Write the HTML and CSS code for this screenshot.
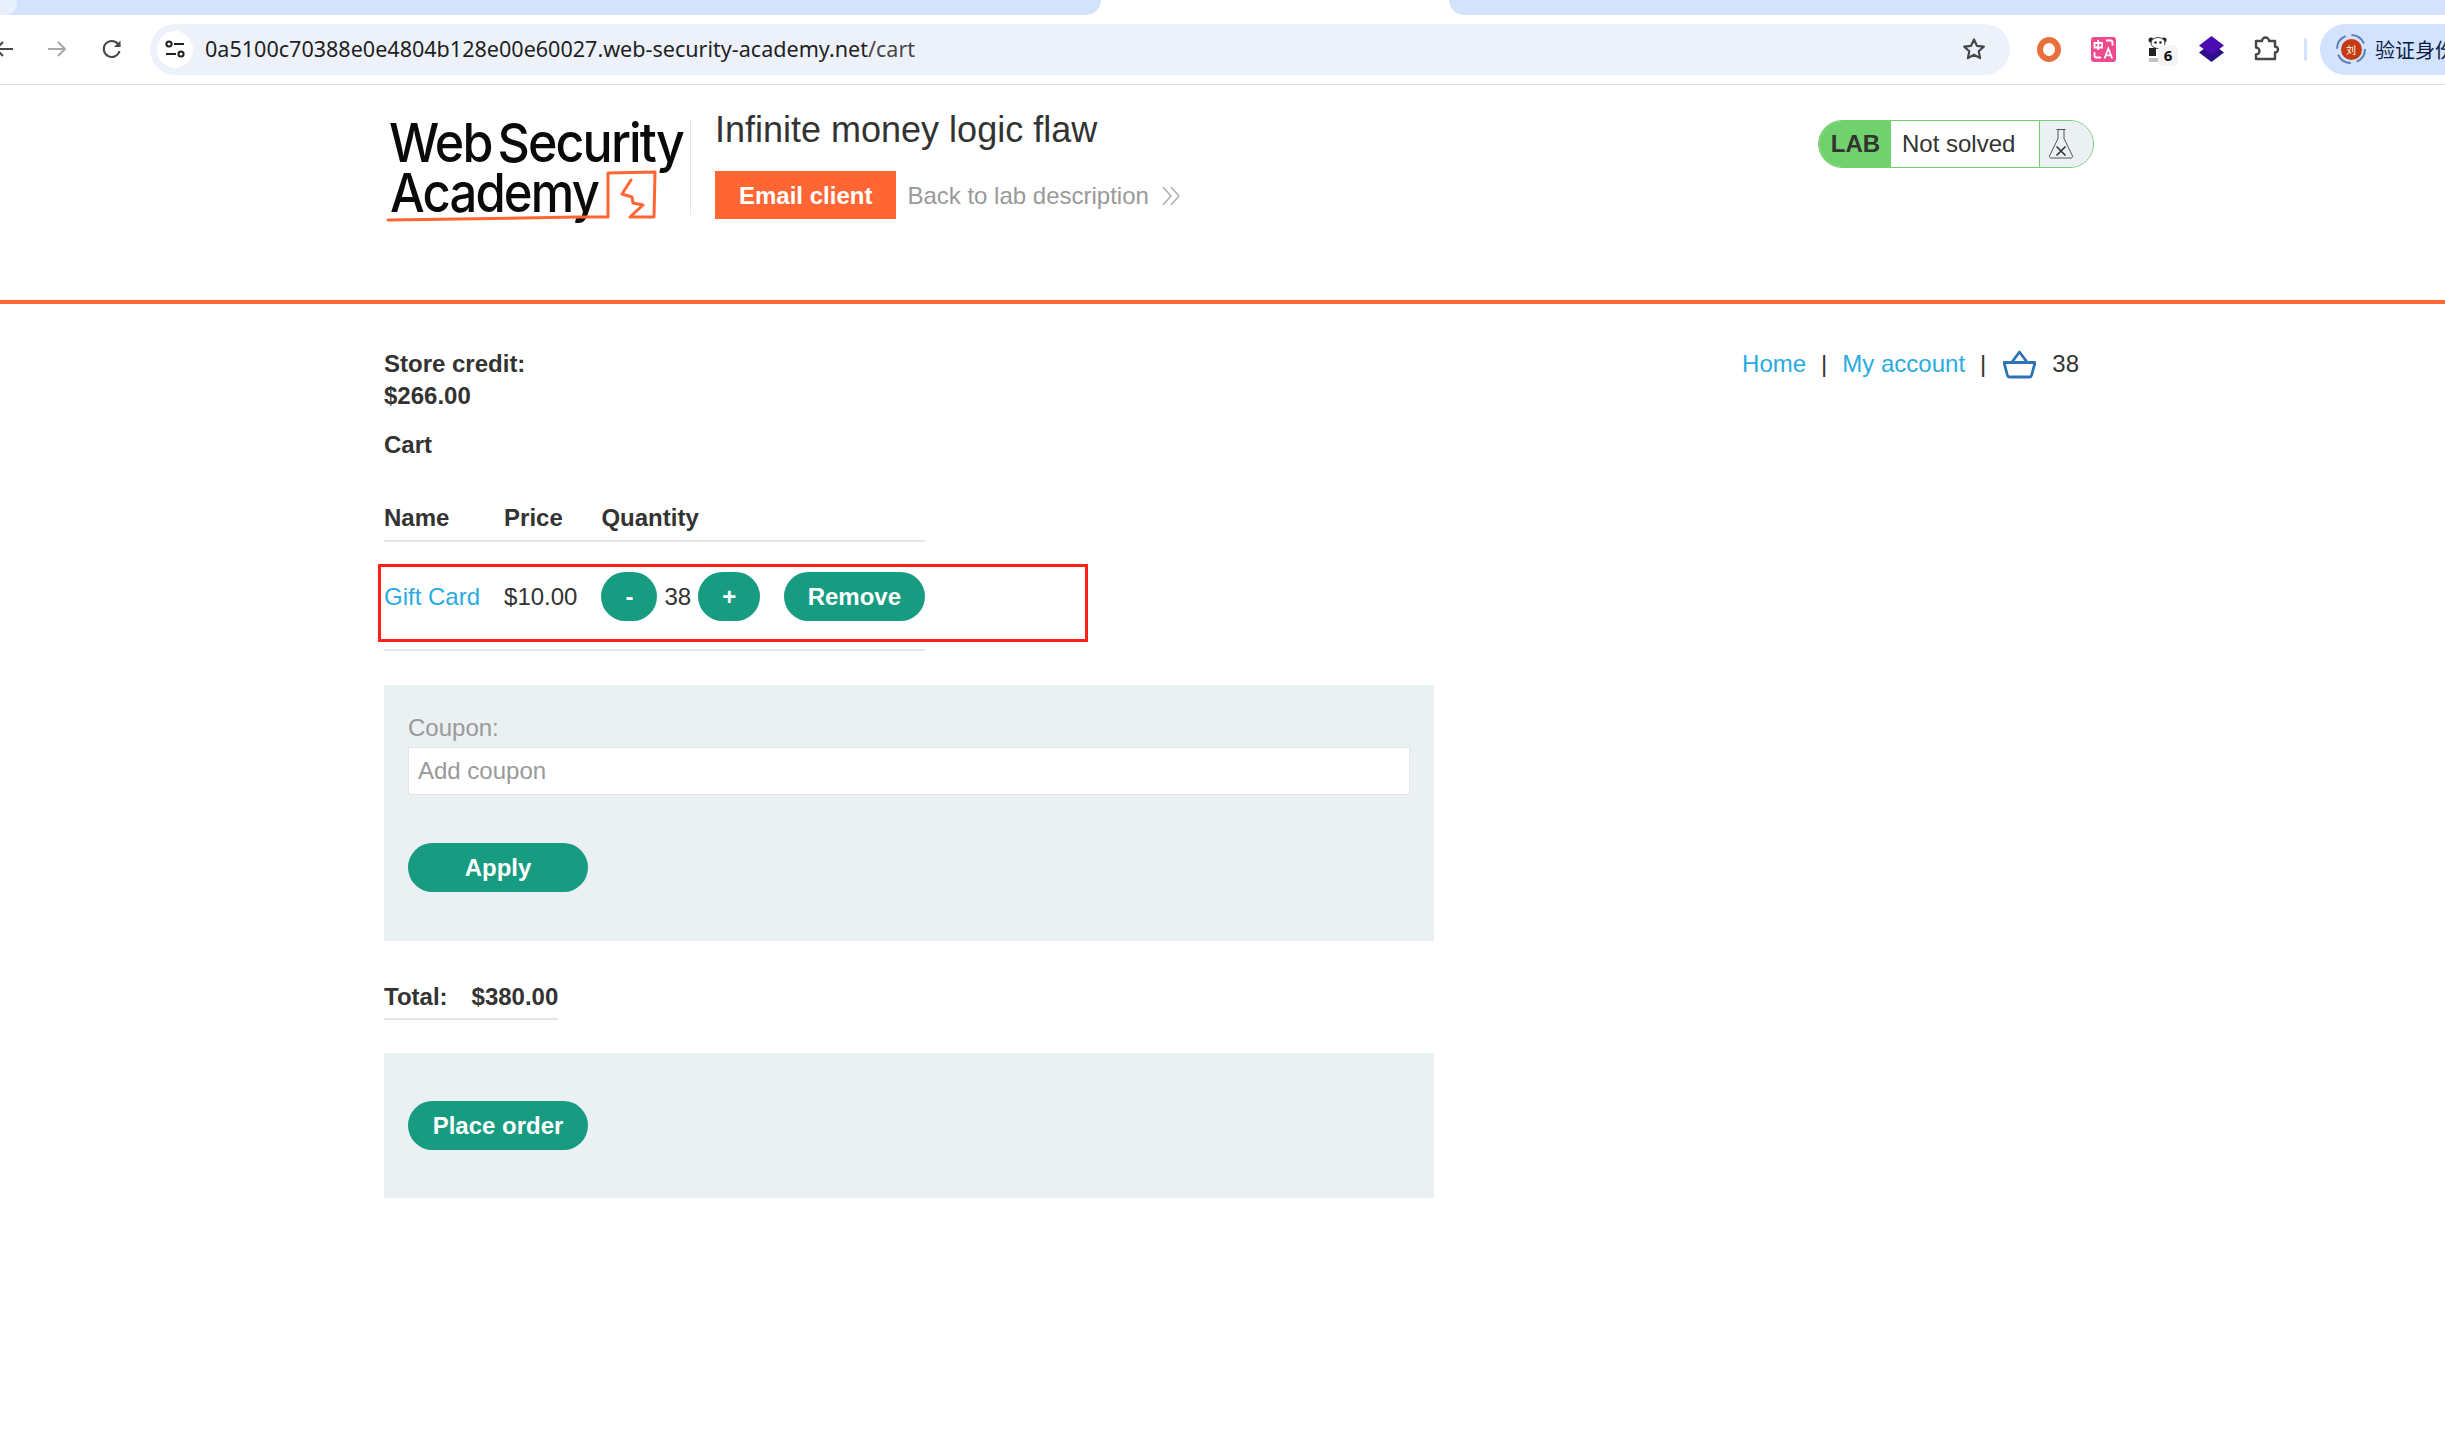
FILE: index.html
```html
<!DOCTYPE html>
<html lang="en">
<head>
<meta charset="utf-8">
<title>Infinite money logic flaw</title>
<link rel="stylesheet" href="styles.css">
</head>
<body>
<div class="tabstrip">
  <div class="tab-inactive tab-left"><span class="tab-notch"></span></div>
  <div class="tab-active"></div>
  <div class="tab-inactive tab-right"></div>
</div>
<div class="toolbar">
  <div class="nav-buttons">
    <svg class="ic-back" width="24" height="24" viewBox="0 0 24 24"><path d="M20 12H3M10 5l-7 7 7 7" fill="none" stroke="#474747" stroke-width="2"/></svg>
    <svg class="ic-fwd" width="24" height="24" viewBox="0 0 24 24"><path d="M3 12h17M13 5l7 7-7 7" fill="none" stroke="#a8a8a8" stroke-width="2"/></svg>
    <svg class="ic-reload" width="24" height="24" viewBox="0 0 24 24"><path d="M19.5 14a8 8 0 1 1-1.6-7.2L20 9" fill="none" stroke="#474747" stroke-width="2"/><path d="M20.5 3.500v6.500h-6.500z" fill="#474747"/></svg>
  </div>
  <div class="omnibox">
    <span class="tune">
      <svg width="22" height="20" viewBox="0 0 22 20"><g fill="none" stroke="#1f1f1f" stroke-width="2"><circle cx="5" cy="5" r="2.600"/><path d="M10 5h10M2 15h10"/><circle cx="17" cy="15" r="2.600"/></g></svg>
    </span>
    <span class="url">0a5100c70388e0e4804b128e00e60027.web-security-academy.net<span class="url-path">/cart</span></span>
    <svg class="star" width="26" height="26" viewBox="0 0 26 26"><path d="M13 3.500l2.900 6.300 6.900.8-5.100 4.700 1.400 6.800-6.100-3.400-6.100 3.400 1.400-6.800-5.100-4.700 6.900-.8z" fill="none" stroke="#474747" stroke-width="2.200" stroke-linejoin="round"/></svg>
  </div>
  <div class="extensions">
    <span class="ext-ring"></span>
    <svg class="ext" width="25" height="25" viewBox="0 0 25 25"><rect width="25" height="25" rx="3" fill="#ee4b8f"/><g fill="none" stroke="#fff" stroke-width="1.800"><path d="M3.500 6h7.500v4.500H3.500zM7.200 3v10M15 3.500h4.500a2 2 0 0 1 2 2v3M3.500 15v3.500a2 2 0 0 0 2 2h4.500"/><path d="M13.500 21.500l3.800-10 3.800 10M14.800 18.300h5"/></g></svg>
    <span class="ext-panda">
      <svg width="20" height="26" viewBox="0 0 20 26"><circle cx="3" cy="4" r="2.500" fill="#222"/><circle cx="16" cy="4" r="2.500" fill="#222"/><ellipse cx="10" cy="7" rx="7" ry="5.500" fill="#fff" stroke="#444"/><circle cx="7.500" cy="6.500" r="1.300" fill="#222"/><circle cx="12.500" cy="6.500" r="1.300" fill="#222"/><path d="M1 12h7v8H1z" fill="#222"/><path d="M1 23h10M1 25h9" stroke="#888"/></svg>
      <span class="ext-badge">6</span>
    </span>
    <svg class="ext" width="25" height="26" viewBox="0 0 25 26"><path d="M12.500 7L25 16.500 12.500 26 0 16.500z" fill="#2c0f8a"/><path d="M12.500 0L25 9.500 12.500 19 0 9.500z" fill="#4a0cb0"/></svg>
    <svg class="ext" width="26" height="26" viewBox="0 0 26 26"><path d="M2 5h6a3.500 3.500 0 0 1 7 0h6v5.500a3 3 0 0 1 0 6V23H2v-4.500a3 3 0 0 0 0-7z" fill="none" stroke="#474747" stroke-width="2.400" stroke-linejoin="round"/></svg>
    <span class="ext-sep"></span>
  </div>
  <div class="profile">
    <span class="avatar-ring">
      <svg class="ring-dash" width="30" height="30" viewBox="0 0 30 30"><circle cx="15" cy="15" r="14" fill="none" stroke="#5b7fb5" stroke-width="2" stroke-dasharray="16 6"/></svg>
      <span class="avatar">刘</span>
    </span>
    <span class="profile-text">验证身份</span>
  </div>
</div>

<header class="academy-header">
  <div class="logo-wrap">
    <svg class="logo" width="305" height="110" viewBox="0 0 305 110">
      <text class="logo-text logo-line1" x="4" y="42" textLength="294" lengthAdjust="spacingAndGlyphs">Web Security</text>
      <text class="logo-text" x="5" y="92" textLength="208" lengthAdjust="spacingAndGlyphs">Academy</text>
      <path d="M3 100C60 99.500 140 98 193 97l30 0V53l47-1-1 45h-24L258 85 248 83 247 77 237 74 246 60" fill="none" stroke="#ff6633" stroke-width="3" stroke-linejoin="round" stroke-linecap="round"/>
    </svg>
  </div>
  <div class="lab-title">
    <h2 class="lab-name">Infinite money logic flaw</h2>
    <div class="lab-actions">
      <a class="email-btn">Email client</a>
      <a class="back-link">Back to lab description</a>
      <svg class="chevrons" width="18" height="20" viewBox="0 0 18 20"><path d="M1 1l8 9-8 9M9 1l8 9-8 9" fill="none" stroke="#a9a9a9" stroke-width="1.300"/></svg>
    </div>
  </div>
  <div class="status-pill">
    <span class="status-lab">LAB</span>
    <span class="status-text">Not solved</span>
    <span class="status-flask">
      <svg width="26" height="32" viewBox="0 0 26 32"><path d="M8.500 1.500h9M10 1.500v9L1.500 28a1.500 1.500 0 0 0 1.500 2h20a1.500 1.500 0 0 0 1.500-2L16 10.500v-9" fill="none" stroke="#555" stroke-width="1"/><path d="M8.500 18.500l9 9M17.500 18.500l-9 9" stroke="#333" stroke-width="1.600"/></svg>
    </span>
  </div>
</header>

<main class="content">
  <div class="top-row">
    <div class="credit">
      <div class="bold-line">Store credit:</div>
      <div class="bold-line">$266.00</div>
    </div>
    <nav class="top-links">
      <a class="link">Home</a><span class="pipe">|</span>
      <a class="link">My account</a><span class="pipe">|</span>
      <svg class="basket" width="33" height="29" viewBox="0 0 33 29"><path d="M1 12.500h31l-3.500 13a2 2 0 0 1-2 1.500h-20a2 2 0 0 1-2-1.500zM9 12l7.500-10L24 12" fill="none" stroke="#2c72b6" stroke-width="2.800" stroke-linejoin="round"/></svg>
      <span class="basket-count">38</span>
    </nav>
  </div>
  <h3 class="cart-title">Cart</h3>

  <div class="cart-wrap">
    <table class="cart-table">
      <tbody>
        <tr class="head-row"><th>Name</th><th>Price</th><th>Quantity</th></tr>
        <tr class="item-row">
          <td><a class="link">Gift Card</a></td>
          <td>$10.00</td>
          <td class="qty-cell">
            <button class="btn">-</button>
            <span class="qty">38</span>
            <button class="btn">+</button>
            <button class="btn btn-remove">Remove</button>
          </td>
        </tr>
      </tbody>
    </table>
    <div class="annotation"></div>
  </div>

  <form class="panel panel-coupon">
    <label class="coupon-label">Coupon:</label>
    <input class="coupon-input" placeholder="Add coupon">
    <button type="button" class="btn btn-wide">Apply</button>
  </form>

  <table class="total-table">
    <tbody><tr><th>Total:</th><th>$380.00</th></tr></tbody>
  </table>

  <form class="panel panel-order">
    <button type="button" class="btn btn-wide">Place order</button>
  </form>
</main>
</body>
</html>
```
FILE: styles.css
```css
* { box-sizing: border-box; }
html, body { margin: 0; padding: 0; background: #fff; }
body {
  width: 2445px;
  height: 1449px;
  overflow: hidden;
  font-family: "Liberation Sans", Arial, sans-serif;
  font-size: 24px;
  color: #333332;
}

/* browser chrome */
.tabstrip { display: flex; height: 15px; background: #fff; }
.tab-inactive { background: #d3e3fd; height: 15px; position: relative; }
.tab-left { width: 1101px; border-bottom-right-radius: 15px; }
.tab-right { flex: 1; border-bottom-left-radius: 15px; }
.tab-active { width: 348px; }
.tab-notch {
  position: absolute; left: 0; top: 0; width: 17px; height: 15px;
  background: #e9f0fd; border-bottom-right-radius: 12px;
}
.toolbar {
  display: flex; align-items: center; height: 70px;
  padding-bottom: 10px; padding-top: 9px;
  border-bottom: 1px solid #e1e1e1;
  overflow: hidden;
}
.nav-buttons { display: flex; align-items: center; width: 150px; flex: none; position: relative; }
.ic-back { margin-left: -7px; }
.ic-fwd { margin-left: 28px; }
.ic-reload { margin-left: 31px; }
.omnibox {
  width: 1860px; height: 51px; flex: none;
  background: #edf2fa; border-radius: 26px;
  display: flex; align-items: center; padding-left: 7px; padding-right: 23px;
}
.tune {
  width: 36px; height: 37px; border-radius: 50%; background: #fff;
  display: flex; align-items: center; justify-content: center; flex: none;
}
.url {
  margin-left: 12px; font-family: "Noto Sans", "Open Sans", sans-serif;
  font-size: 21.550px; line-height: 29px; padding-bottom: 1px; color: #1f1f1f; white-space: nowrap; flex: 1;
}
.url-path { color: #474747; }
.star { flex: none; }
.extensions { display: flex; align-items: center; width: 310px; flex: none; padding-left: 27px; }
.ext-ring {
  width: 24px; height: 25px; border-radius: 50%;
  border: 6.500px solid #e8703a; flex: none; margin-right: 30px;
}
.ext { flex: none; }
.ext-panda { position: relative; width: 20px; height: 26px; margin: 0 31px 0 32px; flex: none; }
.ext-badge {
  position: absolute; left: 10px; top: 9px; width: 20px; height: 21px;
  background: #f4f4f4; border-radius: 5px; font: 700 15px/21px "Noto Sans", sans-serif;
  color: #111; text-align: center;
}
.ext-panda + .ext { margin-right: 30px; }
.ext-sep { width: 3px; height: 23px; background: #d3e3fd; border-radius: 2px; margin-left: 24px; flex: none; }
.profile {
  flex: 1; height: 51px; background: #d3e3fd; border-radius: 26px 0 0 26px;
  display: flex; align-items: center; padding-left: 16px; white-space: nowrap; overflow: hidden;
}
.avatar-ring {
  position: relative; width: 30px; height: 30px;
  display: flex; align-items: center; justify-content: center; flex: none;
}
.ring-dash { position: absolute; left: 0; top: 0; }
.avatar {
  width: 21px; height: 21px; border-radius: 50%; background: #c63a10; color: #fff;
  font: 10px/21px "Noto Sans CJK SC", sans-serif; text-align: center;
}
.profile-text { margin-left: 9px; font: 20px "Noto Sans CJK SC", sans-serif; color: #0b1d47; }

/* academy header */
.academy-header {
  display: flex; align-items: flex-start; height: 219px;
  padding: 33px 351px 0 385px;
  border-bottom: 4px solid #ff6633;
}
.logo-wrap { width: 306px; height: 95px; border-right: 1px solid #e6e6e6; margin-top: 2px; flex: none; }
.logo { display: block; overflow: visible; }
.logo-text {
  font-family: Inter, "Liberation Sans", sans-serif; font-size: 54px; font-weight: 500; fill: #0a0a0a;
  letter-spacing: -2px;
}
.logo-line1 { word-spacing: -6px; }
.lab-title { margin-left: 24px; flex: 1; }
.lab-name { margin: -10px 0 0; font-size: 36px; font-weight: 400; line-height: 44px; color: #333332; }
.lab-actions { display: flex; align-items: center; margin-top: 19px; }
.email-btn {
  height: 48px; padding: 0 24px; background: #ff6633; color: #fff;
  font-weight: 700; line-height: 50px;
}
.back-link { margin-left: 11px; padding-top: 2px; color: #999; }
.chevrons { margin-left: 13px; margin-top: 2px; }
.status-pill {
  display: flex; align-items: stretch; width: 276px; height: 48px; margin-top: 2px;
  border: 1.500px solid #70d16d; border-radius: 24px; overflow: hidden;
}
.status-lab {
  background: #70d16d; font-weight: 700; width: 72px; text-align: center; line-height: 46px;
  padding-left: 1px; color: #333332;
}
.status-text { flex: 1; padding-left: 11px; line-height: 46px; }
.status-flask {
  width: 54px; background: #ebf0f2; border-left: 1.500px solid #70d16d;
  display: flex; align-items: center; padding-left: 8px;
}

/* content */
.content { padding: 44px 0 0 384px; line-height: 32px; }
.top-row { display: flex; justify-content: space-between; padding-right: 366px; }
.bold-line { font-weight: 700; }
.top-links { display: flex; align-items: flex-start; }
.link { color: #29abe2; }
.pipe { margin: 0 15px; }
.basket { margin: 2px 16px 0 2px; }
.cart-title { margin: 17px 0 0; font-size: 24px; font-weight: 700; line-height: 32px; }
.cart-wrap { position: relative; margin-top: 41px; }
.cart-table, .total-table { border-collapse: collapse; }
.cart-table th, .cart-table td, .total-table th { padding: 0 24px 0 0; text-align: left; }
.cart-table th:last-child, .cart-table td:last-child { padding-right: 0; }
.head-row { height: 39px; border-bottom: 2px solid #e6e6e6; }
.head-row th { vertical-align: top; }
.item-row { height: 109px; border-bottom: 2px solid #e6e6e6; }
.item-row td { vertical-align: top; padding-top: 30px; line-height: 49px; }
.qty-cell { display: flex; align-items: center; }
.btn {
  height: 49px; padding: 0 24px; border: 0; border-radius: 25px;
  background: #179b81; color: #fff;
  font: 700 24px/49px "Liberation Sans", Arial, sans-serif;
}
.qty { margin: 0 7px; }
.btn-remove { margin-left: 24px; padding: 0 23.500px; }
.btn-wide { width: 180px; padding: 0; display: block; }
.annotation {
  position: absolute; left: -6px; top: 62px; width: 710px; height: 78px;
  border: 3px solid #ff2118;
}
.panel { width: 1050px; background: #ebf0f2; padding: 24px; }
.panel-coupon { margin-top: 34px; height: 256px; padding-top: 27px; }
.coupon-label { display: block; color: #999; line-height: 32px; }
.coupon-input {
  display: block; width: 1002px; height: 48px; margin-top: 3px; padding: 0 9px;
  border: 1px solid #e6e6e6; background: #fff; font: 24px "Liberation Sans", Arial, sans-serif;
}
.coupon-input::placeholder { color: #999; opacity: 1; }
.panel-coupon .btn { margin-top: 48px; }
.total-table { margin-top: 40px; border-bottom: 2px solid #e6e6e6; }
.total-table th { height: 38px; vertical-align: top; }
.total-table th:last-child { padding-right: 0; }
.panel-order { margin-top: 33px; height: 145px; padding-top: 48px; }
```
